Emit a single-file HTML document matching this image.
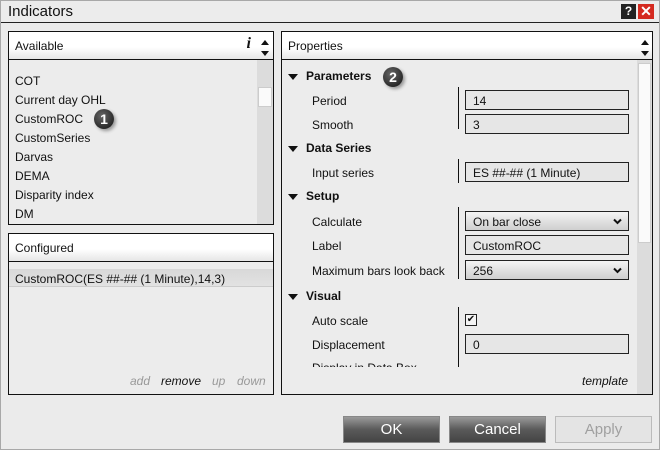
<!DOCTYPE html>
<html><head><style>
*{box-sizing:border-box;margin:0;padding:0}
body{width:660px;height:450px;background:#ebebeb;font-family:"Liberation Sans",sans-serif;font-size:12px;color:#111;position:relative;overflow:hidden}
.abs{position:absolute}
.win{left:0;top:0;width:660px;height:450px;border:1px solid #a8a8a8}
.title{left:1px;top:1px;width:658px;height:22px;background:#ececec;border-bottom:1px solid #222;font-size:15px;padding:2px 0 0 7px}
.panel{border:1px solid #111;background:#ececec}
.hdr{position:absolute;left:0;top:0;right:0;height:28px;border-bottom:1px solid #111;background:linear-gradient(#fff 0%,#fff 55%,#e6e6e6 100%);padding:7px 0 0 6px;font-size:12px}
.t{position:absolute;white-space:nowrap}
.b{font-weight:bold}
.tri{position:absolute;width:0;height:0;border-left:5px solid transparent;border-right:5px solid transparent;border-top:6px solid #111}
.box{position:absolute;left:465px;width:164px;height:20px;border:1px solid #222;background:#e6e6e6;padding:3px 0 0 7px}
.sel{background:linear-gradient(#f4f4f4,#cfcfcf)}
.chev{position:absolute;right:6px;top:6px}
.btn{position:absolute;top:416px;width:97px;height:27px;border:1px solid #888;color:#fff;font-size:15px;text-align:center;padding-top:4px;background:linear-gradient(#9a9a9a,#5a5a5a 50%,#444)}
.circ{position:absolute;width:20px;height:20px;border-radius:50%;background:radial-gradient(circle at 40% 35%,#666,#111);color:#fff;font-weight:bold;font-size:14px;text-align:center;line-height:20px;box-shadow:2px 2px 3px #999}
.arr{position:absolute;width:0;height:0;border-left:4px solid transparent;border-right:4px solid transparent}
</style></head><body>
<div class="abs win"></div>
<div class="abs title">Indicators</div>
<div class="abs" style="left:621px;top:4px;width:15px;height:15px;background:#222;color:#fff;font-weight:bold;font-size:12px;text-align:center;line-height:15px">?</div>
<div class="abs" style="left:638px;top:4px;width:16px;height:15px;background:#d42a20;color:#fff;font-weight:bold;font-size:14px;text-align:center;line-height:15px">✕</div>

<div class="abs panel" style="left:8px;top:31px;width:266px;height:194px">
 <div class="hdr">Available<span style="position:absolute;right:22px;top:3px;font-family:'Liberation Serif',serif;font-style:italic;font-weight:bold;font-size:16px">i</span></div>
 <div class="arr" style="left:252px;top:8px;border-bottom:5px solid #111"></div>
 <div class="arr" style="left:252px;top:19px;border-top:5px solid #111"></div>
 <div class="abs" style="left:248px;top:28px;width:16px;height:164px;background:#dcdcdc"></div>
 <div class="abs" style="left:249px;top:55px;width:14px;height:20px;background:#fafafa;border:1px solid #ccc"></div>
 <div class="t" style="left:6px;top:42px">COT</div>
 <div class="t" style="left:6px;top:61px">Current day OHL</div>
 <div class="t" style="left:6px;top:80px">CustomROC</div>
 <div class="t" style="left:6px;top:99px">CustomSeries</div>
 <div class="t" style="left:6px;top:118px">Darvas</div>
 <div class="t" style="left:6px;top:137px">DEMA</div>
 <div class="t" style="left:6px;top:156px">Disparity index</div>
 <div class="t" style="left:6px;top:175px">DM</div>
 <div class="circ" style="left:85px;top:77px">1</div>
</div>

<div class="abs panel" style="left:8px;top:233px;width:266px;height:162px">
 <div class="hdr">Configured</div>
 <div class="abs" style="left:0;top:35px;width:264px;height:18px;background:linear-gradient(#d8d8d8,#e2e2e2);border-bottom:1px solid #ccc"></div>
 <div class="t" style="left:6px;top:38px">CustomROC(ES ##-## (1 Minute),14,3)</div>
 <div class="t" style="left:121px;top:140px;font-style:italic;color:#999">add</div>
 <div class="t" style="left:152px;top:140px;font-style:italic;color:#111">remove</div>
 <div class="t" style="left:203px;top:140px;font-style:italic;color:#999">up</div>
 <div class="t" style="left:228px;top:140px;font-style:italic;color:#999">down</div>
</div>

<div class="abs panel" style="left:281px;top:31px;width:372px;height:364px">
 <div class="hdr">Properties</div>
 <div class="arr" style="left:359px;top:8px;border-bottom:5px solid #111"></div>
 <div class="arr" style="left:359px;top:19px;border-top:5px solid #111"></div>
 <div class="abs" style="left:355px;top:28px;width:15px;height:334px;background:#dcdcdc"></div>
 <div class="abs" style="left:356px;top:31px;width:13px;height:180px;background:#fafafa;border:1px solid #ccc"></div>
</div>
<div class="abs" style="left:282px;top:60px;width:353px;height:307px;overflow:hidden">
 <div class="tri" style="left:6px;top:14px"></div><div class="t b" style="left:24px;top:9px">Parameters</div>
 <div class="circ" style="left:101px;top:7px">2</div>
 <div class="t" style="left:30px;top:34px">Period</div>
 <div class="t" style="left:30px;top:58px">Smooth</div>
 <div class="tri" style="left:6px;top:86px"></div><div class="t b" style="left:24px;top:81px">Data Series</div>
 <div class="t" style="left:30px;top:106px">Input series</div>
 <div class="tri" style="left:6px;top:134px"></div><div class="t b" style="left:24px;top:129px">Setup</div>
 <div class="t" style="left:30px;top:155px">Calculate</div>
 <div class="t" style="left:30px;top:179px">Label</div>
 <div class="t" style="left:30px;top:204px">Maximum bars look back</div>
 <div class="tri" style="left:6px;top:234px"></div><div class="t b" style="left:24px;top:229px">Visual</div>
 <div class="t" style="left:30px;top:254px">Auto scale</div>
 <div class="t" style="left:30px;top:278px">Displacement</div>
 <div class="t" style="left:30px;top:301px">Display in Data Box</div>
 <div class="abs" style="left:176px;top:27px;width:1px;height:42px;background:#111"></div>
 <div class="abs" style="left:176px;top:99px;width:1px;height:24px;background:#111"></div>
 <div class="abs" style="left:176px;top:147px;width:1px;height:72px;background:#111"></div>
 <div class="abs" style="left:176px;top:247px;width:1px;height:60px;background:#111"></div>
</div>
<div class="box" style="top:90px">14</div>
<div class="box" style="top:114px">3</div>
<div class="box" style="top:162px">ES ##-## (1 Minute)</div>
<div class="box sel" style="top:211px">On bar close<svg class="chev" width="9" height="7" viewBox="0 0 9 7"><path d="M1 1.5L4.5 5L8 1.5" stroke="#111" stroke-width="2" fill="none"/></svg></div>
<div class="box" style="top:235px">CustomROC</div>
<div class="box sel" style="top:260px">256<svg class="chev" width="9" height="7" viewBox="0 0 9 7"><path d="M1 1.5L4.5 5L8 1.5" stroke="#111" stroke-width="2" fill="none"/></svg></div>
<div class="abs" style="left:465px;top:314px;width:12px;height:12px;border:1px solid #222;background:#f4f4f4;font-size:10px;line-height:10px;text-align:center">✔</div>
<div class="box" style="top:334px">0</div>
<div class="t" style="left:582px;top:374px;font-style:italic">template</div>

<div class="btn" style="left:343px">OK</div>
<div class="btn" style="left:449px">Cancel</div>
<div class="btn" style="left:555px;background:#e4e4e4;color:#a0a0a0;border-color:#bbb">Apply</div>
</body></html>
